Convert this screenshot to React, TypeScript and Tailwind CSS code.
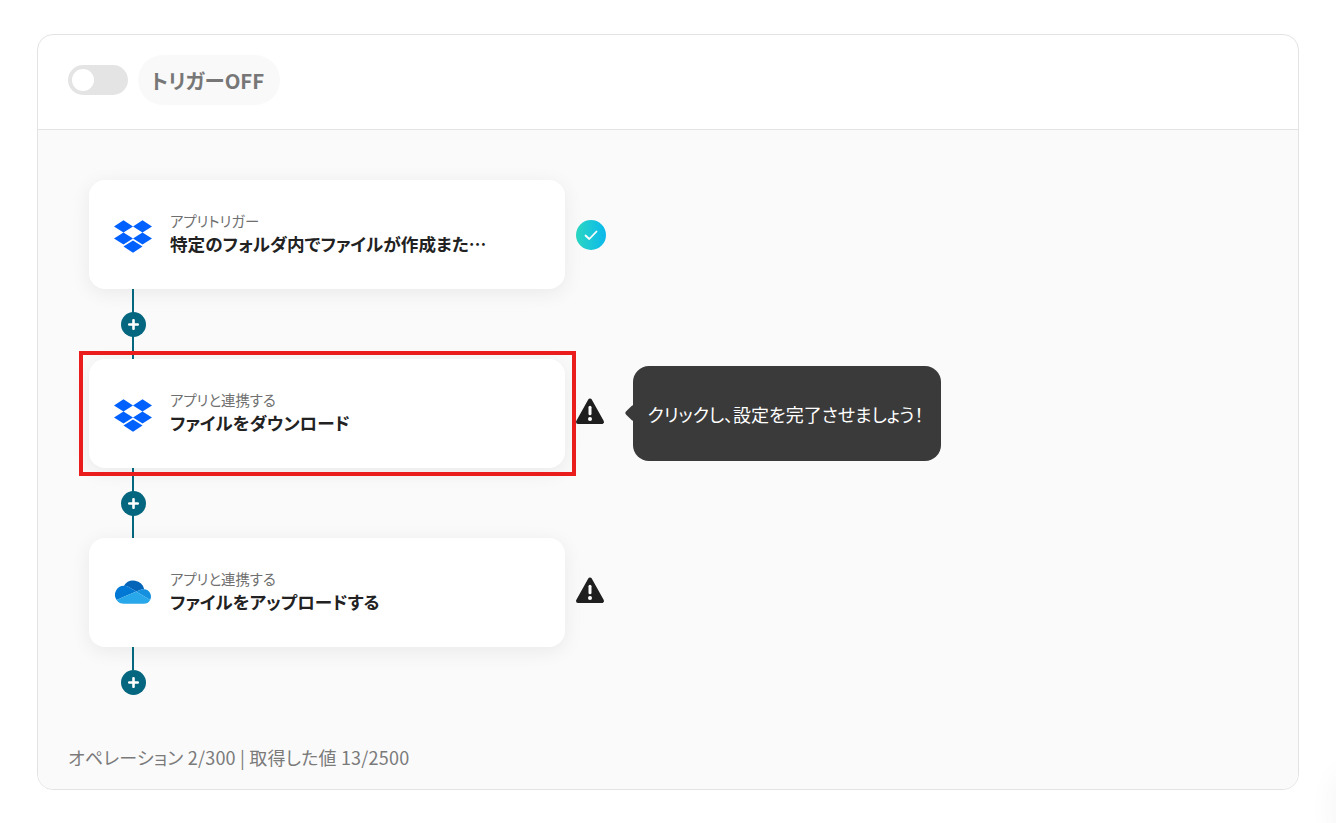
import React from "react";

const font = "font-['Noto_Sans_CJK_JP','Noto_Sans',sans-serif] [font-feature-settings:'palt']";

const Dropbox = () => (
  <svg width="38" height="33" viewBox="0 0 235.45 200" fill="#0061ff" className="mt-[3px]">
    <path d="M58.86 0L0 37.5 58.86 75l58.87-37.5zm117.73 0l-58.86 37.5L176.59 75l58.86-37.5zM0 112.5L58.86 150l58.87-37.5L58.86 75zM176.59 75l-58.86 37.5 58.86 37.5 58.86-37.5zM58.86 162.5l58.87 37.5 58.86-37.5-58.86-37.5z" />
  </svg>
);

const OneDrive = () => (
  <svg width="36" height="25" viewBox="0 5 32 22">
    <path d="M12.2 11.19l6.72 4.02 4-1.68A6.48 6.48 0 0 1 25.5 13c.15 0 .29.01.44.02A10 10 0 0 0 7.88 10c.05 0 .1 0 .15 0a7.96 7.96 0 0 1 4.17 1.19z" fill="#0364b8" />
    <path d="M12.2 11.19A7.96 7.96 0 0 0 8.03 10c-.05 0-.1 0-.15 0A7.99 7.99 0 0 0 1.43 22.58l5.92-2.49 2.64-1.11 5.86-2.47 3.06-1.29z" fill="#0078d4" />
    <path d="M25.94 13.02c-.15-.01-.29-.02-.44-.02a6.48 6.48 0 0 0-2.58.53l-4 1.68 1.16.7 3.8 2.28 1.66.99 5.68 3.4a6.5 6.5 0 0 0-5.28-9.56z" fill="#1490df" />
    <path d="M25.55 19.18l-1.66-.99-3.8-2.28-1.17-.7-3.06 1.29-5.86 2.47-2.64 1.11-5.93 2.5A7.99 7.99 0 0 0 8.03 26H25.5a6.5 6.5 0 0 0 5.72-3.42z" fill="#28a8ea" />
  </svg>
);

const Check = () => (
  <div className="ml-px flex h-[30px] w-[30px] items-center justify-center rounded-full bg-gradient-to-r from-[#2bd6c0] to-[#0cb8ec]">
    <svg width="16" height="16" viewBox="0 0 16 16" fill="none" stroke="#fff" strokeWidth="1.8" strokeLinecap="round" strokeLinejoin="round">
      <path d="M2.5 8.5 6.3 12 13.5 4.5" />
    </svg>
  </div>
);

const Warn = () => (
  <svg width="30" height="28" viewBox="0 0 30 28" className="-mt-[5px]">
    <path d="M15 3.5 27 25H3z" fill="#1f1f1f" stroke="#1f1f1f" strokeWidth="4" strokeLinejoin="round" />
    <rect x="13.5" y="8.7" width="3" height="9.5" rx="1.5" fill="#fff" />
    <circle cx="15" cy="22" r="2" fill="#fff" />
  </svg>
);

const Plus = () => (
  <div className="flex h-[25px] w-[25px] shrink-0 items-center justify-center rounded-full bg-[#04677f]">
    <svg width="11" height="11" viewBox="0 0 11 11" stroke="#fff" strokeWidth="2.6" strokeLinecap="round">
      <path d="M5.5 1.2v8.6M1.200 5.500h8.600" />
    </svg>
  </div>
);

const Connector = () => (
  <div className="ml-[43px] flex h-[70px] w-[2px] flex-col items-center justify-center bg-[#04677f]">
    <Plus />
  </div>
);

const LastConnector = () => (
  <div className="ml-[31.5px] flex w-[25px] flex-col items-center">
    <div className="h-[23px] w-[2px] bg-[#04677f]" />
    <Plus />
  </div>
);

type NodeProps = {
  icon: React.ReactNode;
  label: string;
  title: string;
  status: React.ReactNode;
  children?: React.ReactNode;
};

const FlowNode = ({ icon, label, title, status, children }: NodeProps) => (
  <div className="flex items-center">
    <div className="flex h-[109px] w-[476px] items-center rounded-2xl bg-white pl-[25px] shadow-[0_4px_20px_rgba(0,0,0,0.07)]">
      <div className="flex w-[38px] justify-center">{icon}</div>
      <div className="ml-[18px] -mt-[2px] flex flex-col">
        <span className="text-[14.4px] leading-[20px] text-[#6f6f6f]">{label}</span>
        <span className="w-[320px] truncate text-[17.6px] leading-[26px] font-bold text-[#222]">{title}</span>
      </div>
    </div>
    <div className="ml-[10px] w-[30px]">{status}</div>
    {children}
  </div>
);

export default function App() {
  return (
    <div className={`${font} relative h-[823px] overflow-hidden bg-white px-[37px] pt-[34px]`}>
      <div className="flex h-[756px] w-[1262px] flex-col overflow-hidden rounded-2xl border border-[#e3e3e3]">
        <div className="flex h-[95px] shrink-0 items-center gap-[10px] border-b border-[#e3e3e3] pb-[4px] pl-[30px]">
          <div className="flex h-[30px] w-[60px] items-center rounded-full bg-[#e4e4e4] pl-1">
            <div className="h-[22px] w-[22px] rounded-full bg-white" />
          </div>
          <div className="flex h-[50px] items-center rounded-full bg-[#f9f9f9] pr-[16px] pl-[13px] text-[20.4px] font-bold text-[#777]">
            トリガーOFF
          </div>
        </div>
        <div className="relative flex flex-1 flex-col bg-[#fafafa] pt-[50px] pl-[51px]">
          <FlowNode icon={<Dropbox />} label="アプリトリガー" title="特定のフォルダ内でファイルが作成または更新されたら" status={<Check />} />
          <Connector />
          <FlowNode icon={<Dropbox />} label="アプリと連携する" title="ファイルをダウンロード" status={<Warn />}>
            <div className="relative ml-[28px] flex h-[95px] w-[308px] items-center justify-center rounded-2xl bg-[#3a3a3a] pr-[3px] text-lg text-white">
              <span className="absolute top-[41px] left-[-6px] h-3 w-3 rotate-45 rounded-[2px] bg-[#3a3a3a]" />
              クリックし、設定を完了させましょう！
            </div>
          </FlowNode>
          <Connector />
          <FlowNode icon={<OneDrive />} label="アプリと連携する" title="ファイルをアップロードする" status={<Warn />} />
          <LastConnector />
          <div className="mt-[50px] ml-[-21px] text-lg leading-[24px] tracking-[0.2px] text-[#7a7a7a]">
            オペレーション 2/300 | 取得した値 13/2500
          </div>
          <div className="absolute top-[221px] left-[41px] h-[125px] w-[497px] border-4 border-[#ea1c1c]" />
        </div>
      </div>
      <div className="absolute right-[-30px] bottom-[-20px] h-[70px] w-[30px] rounded-full shadow-[0_0_30px_rgba(0,0,0,0.05)]" />
    </div>
  );
}
